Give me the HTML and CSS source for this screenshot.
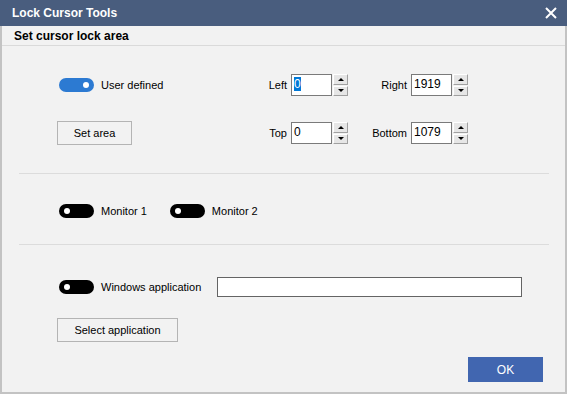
FILE: index.html
```html
<!DOCTYPE html>
<html lang="en">
<head>
    <meta charset="UTF-8">
    <meta name="viewport" content="width=device-width, initial-scale=1.0">
    <title>Lock Cursor Tools</title>
    <link rel="stylesheet" href="styles.css">
</head>
<body>
    <div class="window">
        <div class="titlebar">
            <span class="title">Lock Cursor Tools</span>
            <svg class="close" width="12" height="12" viewBox="0 0 12 12">
                <path d="M1 1 L11 11 M11 1 L1 11" stroke="#fff" stroke-width="2" fill="none"/>
            </svg>
        </div>

        <div class="frame">
            <div class="tab-header">Set cursor lock area</div>

            <div class="panel">
                <div class="area-grid">
                    <label class="option">
                        <span class="toggle on"></span>
                        User defined
                    </label>
                    <span class="field-label">Left</span>
                    <div class="spin">
                        <div class="spin-input"><span class="selected">0</span></div>
                        <div class="spin-buttons">
                            <span class="spin-btn up"></span>
                            <span class="spin-btn down"></span>
                        </div>
                    </div>
                    <span class="field-label">Right</span>
                    <div class="spin">
                        <div class="spin-input">1919</div>
                        <div class="spin-buttons">
                            <span class="spin-btn up"></span>
                            <span class="spin-btn down"></span>
                        </div>
                    </div>

                    <div><button class="btn btn-set">Set area</button></div>
                    <span class="field-label">Top</span>
                    <div class="spin">
                        <div class="spin-input">0</div>
                        <div class="spin-buttons">
                            <span class="spin-btn up"></span>
                            <span class="spin-btn down"></span>
                        </div>
                    </div>
                    <span class="field-label">Bottom</span>
                    <div class="spin">
                        <div class="spin-input">1079</div>
                        <div class="spin-buttons">
                            <span class="spin-btn up"></span>
                            <span class="spin-btn down"></span>
                        </div>
                    </div>
                </div>

                <hr class="separator">

                <div class="monitors">
                    <label class="option">
                        <span class="toggle"></span>
                        Monitor 1
                    </label>
                    <label class="option">
                        <span class="toggle"></span>
                        Monitor 2
                    </label>
                </div>

                <hr class="separator">

                <div class="app-section">
                    <div class="app-row">
                        <label class="option option-app">
                            <span class="toggle"></span>
                            Windows application
                        </label>
                        <div class="app-input"></div>
                    </div>
                    <button class="btn btn-select">Select application</button>
                </div>

                <div class="footer">
                    <button class="btn-ok">OK</button>
                </div>
            </div>
        </div>
    </div>
</body>
</html>
```

FILE: styles.css
```css
* {
    box-sizing: border-box;
}

body {
    margin: 0;
    font-family: 'Liberation Sans', Arial, sans-serif;
    font-size: 11px;
    color: #000;
    background: #f2f2f2;
}

.window {
    width: 567px;
    height: 394px;
    display: flex;
    flex-direction: column;
    overflow: hidden;
}

.titlebar {
    flex: none;
    height: 26px;
    background-color: #495d7e;
    display: flex;
    align-items: center;
    justify-content: space-between;
    padding: 0 10px 0 12px;
}

.title {
    color: #fff;
    font-weight: bold;
    font-size: 12px;
}

.close {
    display: block;
}

.frame {
    flex: 1;
    min-height: 0;
    display: flex;
    flex-direction: column;
    border: 2px solid #c3c3c3;
    border-top: none;
    background: #f2f2f2;
}

.tab-header {
    flex: none;
    height: 20px;
    border-bottom: 1px solid #dadada;
    font-weight: bold;
    font-size: 12px;
    padding: 3px 0 0 12px;
}

.panel {
    flex: 1;
    display: flex;
    flex-direction: column;
    padding: 27px 0 0;
}

/* --- cursor area --- */
.area-grid {
    display: grid;
    grid-template-columns: 190px 36px 57px 55px 57px;
    grid-template-rows: 24px 24px;
    column-gap: 4px;
    row-gap: 24px;
    align-items: center;
    padding-left: 55px;
    margin-bottom: 28px;
}

.option {
    display: flex;
    align-items: center;
    gap: 7px;
    padding-left: 2px;
    white-space: nowrap;
}

.toggle {
    width: 35px;
    height: 14px;
    border-radius: 7px;
    background: #000;
    position: relative;
    flex: none;
}

.toggle::after {
    content: '';
    position: absolute;
    top: 4px;
    left: 5px;
    width: 6px;
    height: 6px;
    border-radius: 50%;
    background: #fff;
}

.toggle.on {
    background: #2c7ad2;
}

.toggle.on::after {
    left: auto;
    right: 5px;
}

.field-label {
    text-align: right;
}

.spin {
    display: flex;
    height: 22px;
}

.spin-input {
    width: 41px;
    border: 1px solid #7a7a7a;
    background: #fff;
    padding: 2px 0 0 2px;
    font-size: 12px;
}

.selected {
    background: #0078d7;
    color: #fff;
}

.spin-buttons {
    width: 16px;
    display: flex;
    flex-direction: column;
    gap: 1px;
    padding-left: 1px;
}

.spin-btn {
    flex: 1;
    background: #e6e6e6;
    border: 1px solid #a0a0a0;
    border-top-color: #fff;
    border-left-color: #fff;
    position: relative;
}

.spin-btn::after {
    content: '';
    position: absolute;
    left: 4px;
    top: 3px;
    border-left: 3px solid transparent;
    border-right: 3px solid transparent;
}

.spin-btn.up::after {
    border-bottom: 3px solid #000;
}

.spin-btn.down::after {
    top: 2px;
    border-top: 3px solid #000;
}

.btn {
    font-family: 'Liberation Sans', Arial, sans-serif;
    font-size: 11px;
    background: #f2f2f2;
    border: 1px solid #b4b4b4;
    height: 24px;
    padding: 0;
    color: #000;
}

.btn-set {
    width: 75px;
}

.separator {
    flex: none;
    border: none;
    border-top: 1px solid #dcdcdc;
    margin: 0 16px 0 17px;
    height: 0;
}

/* --- monitors --- */
.monitors {
    display: flex;
    gap: 21px;
    height: 24px;
    align-items: center;
    margin: 25px 0 21px 55px;
}

/* --- application --- */
.app-section {
    display: flex;
    flex-direction: column;
    align-items: flex-start;
    gap: 19px;
    padding: 30px 0 0 55px;
}

.app-row {
    display: flex;
    align-items: center;
    height: 24px;
}

.option-app {
    width: 160px;
}

.app-input {
    width: 305px;
    height: 20px;
    border: 1px solid #646464;
    background: #fff;
}

.btn-select {
    width: 121px;
}

.footer {
    display: flex;
    justify-content: flex-end;
    padding: 15px 22px 0 0;
}

.btn-ok {
    width: 75px;
    height: 25px;
    border: none;
    background: #4166b0;
    color: #fff;
    font-family: 'Liberation Sans', Arial, sans-serif;
    font-size: 12px;
}
```
